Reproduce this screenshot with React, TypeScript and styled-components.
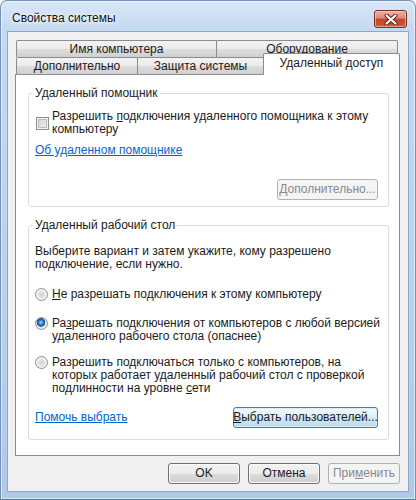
import React from "react";
import styled, { createGlobalStyle } from "styled-components";

const GlobalStyle = createGlobalStyle`
  html, body {
    margin: 0;
    padding: 0;
    background: #ffffff;
  }
  body {
    font-family: "Liberation Sans", Arial, sans-serif;
    font-size: 12px;
    line-height: 13px;
    color: #1b1b1b;
  }
`;

const Window = styled.div`
  box-sizing: border-box;
  width: 416px;
  height: 500px;
  display: flex;
  flex-direction: column;
  padding: 0 6px 7px;
  border: 1px solid #7391b6;
  border-bottom-color: #4a77a5;
  border-radius: 7px 7px 0 0;
  background: linear-gradient(
    180deg,
    #d9e7f7 0%,
    #c4d9f0 30px,
    #b9d1ec 60%,
    #aec9e8 100%
  );
  box-shadow: inset 0 0 0 1px rgba(255, 255, 255, 0.55);
`;

const TitleBar = styled.div`
  flex: none;
  height: 30px;
  display: flex;
  align-items: flex-start;
  justify-content: space-between;
  padding: 0 2px 0 5px;
`;

const Title = styled.div`
  margin-top: 10px;
  line-height: 15px;
  color: #111;
  text-shadow: 0 0 6px #fff, 0 0 3px #fff;
`;

const CloseButton = styled.div`
  box-sizing: border-box;
  margin-top: 9px;
  width: 33px;
  height: 18px;
  display: flex;
  align-items: center;
  justify-content: center;
  border: 1px solid #7a2c1e;
  border-radius: 3px;
  background: linear-gradient(
    180deg,
    #eab0a3 0%,
    #d98a77 45%,
    #c4452c 50%,
    #d0593c 100%
  );
  box-shadow: inset 0 0 0 1px rgba(255, 220, 210, 0.55);
`;

const Client = styled.div`
  flex: 1;
  min-height: 0;
  display: flex;
  flex-direction: column;
  padding: 8px 8px 7px 7px;
  background: #f0f0f0;
  border: 1px solid #8fa8c8;
`;

const TabRow = styled.div`
  flex: none;
  display: flex;
  padding-left: 1px;
`;

const Tab = styled.div<{ $w: number }>`
  box-sizing: border-box;
  width: ${(p) => p.$w}px;
  height: 17px;
  display: flex;
  align-items: center;
  justify-content: center;
  border: 1px solid #898c95;
  border-bottom: none;
  border-radius: 2px 2px 0 0;
  background: linear-gradient(
    180deg,
    #f3f3f3 0%,
    #ebebeb 50%,
    #dedede 50%,
    #d0d0d0 100%
  );
  white-space: nowrap;

  & + & {
    margin-left: -1px;
  }
`;

const ActiveTab = styled(Tab)`
  &&& {
    position: relative;
    z-index: 1;
    height: 22px;
    margin: -4px 0 -1px -1px;
    padding-bottom: 2px;
    background: #ffffff;
  }
`;

const Panel = styled.div`
  flex: 1;
  min-height: 0;
  display: flex;
  flex-direction: column;
  background: #ffffff;
  border: 1px solid #898c95;
  padding: 12px 10px 0 12px;
`;

const Group = styled.fieldset<{ $pb: number }>`
  margin: 0;
  min-width: 0;
  padding: 0 10px ${(p) => p.$pb}px 6px;
  border: 1px solid #d5dfe5;
  border-radius: 3px;

  & + & {
    margin-top: 12px;
  }
`;

const Legend = styled.legend`
  padding: 0 2px;
  margin-left: -2px;
  line-height: 13px;
`;

const CheckRow = styled.label`
  display: flex;
  align-items: center;
  gap: 3px;
  margin-top: 10px;
  padding-left: 1px;
  white-space: nowrap;
`;

const CheckBox = styled.span`
  box-sizing: border-box;
  flex: none;
  width: 13px;
  height: 13px;
  border: 1px solid #8e8f8f;
  box-shadow: inset 0 0 0 1px #f4f4f4, inset 0 0 0 2px #b9bcc1;
  background-image: linear-gradient(135deg, #cbcfd5 0%, #f6f6f6 100%);
`;

const RadioRow = styled.label<{ $mt: number }>`
  display: flex;
  align-items: flex-start;
  gap: 4px;
  margin-top: ${(p) => p.$mt}px;
  white-space: nowrap;
`;

const Radio = styled.span<{ $on?: boolean }>`
  box-sizing: border-box;
  flex: none;
  width: 13px;
  height: 13px;
  border-radius: 50%;
  border: 1px solid #8e8f8f;
  background: ${(p) =>
    p.$on
      ? "radial-gradient(circle at 45% 40%, #b6dcfa 0, #3d86cf 2px, #1b4f94 4px, #e9e9e9 4.6px, #f5f5f5 100%)"
      : "radial-gradient(circle at 50% 50%, #cfd1d4 0, #e2e3e4 3px, #f3f3f3 5px, #fafafa 100%)"};
`;

const Text = styled.div<{ $mt?: number }>`
  margin-top: ${(p) => p.$mt ?? 0}px;
  white-space: nowrap;
`;

const Key = styled.span`
  text-decoration: underline;
  text-underline-offset: 1px;
`;

const Link = styled.a<{ $mt?: number }>`
  display: block;
  width: fit-content;
  margin-top: ${(p) => p.$mt ?? 0}px;
  color: #0066cc;
  text-decoration: underline;
  text-underline-offset: 1px;
  cursor: pointer;
`;

const GroupBody = styled.div`
  display: flex;
  flex-direction: column;
`;

const ButtonRow = styled.div<{ $mt: number; $split?: boolean }>`
  display: flex;
  align-items: center;
  justify-content: ${(p) => (p.$split ? "space-between" : "flex-end")};
  margin-top: ${(p) => p.$mt}px;
`;

const Button = styled.div<{ $w: number; $disabled?: boolean; $focus?: boolean }>`
  box-sizing: border-box;
  width: ${(p) => p.$w}px;
  height: 21px;
  display: flex;
  align-items: center;
  justify-content: center;
  border-radius: 3px;
  white-space: nowrap;
  border: 1px solid
    ${(p) => (p.$disabled ? "#adb2b5" : p.$focus ? "#3c7fb1" : "#707070")};
  color: ${(p) => (p.$disabled ? "#8a8a8a" : "#1b1b1b")};
  box-shadow: inset 0 0 0 1px
    ${(p) => (p.$disabled ? "#f4f4f4" : p.$focus ? "#d8eefb" : "#fbfbfb")};
  background: ${(p) =>
    p.$disabled
      ? "#f4f4f4"
      : p.$focus
      ? "linear-gradient(180deg, #eef7fc 0%, #e1f0f9 50%, #cfe7f5 50%, #bcdcef 100%)"
      : "linear-gradient(180deg, #f2f2f2 0%, #ebebeb 50%, #dddddd 50%, #cfcfcf 100%)"};
`;

const Footer = styled.div`
  flex: none;
  display: flex;
  justify-content: flex-end;
  gap: 8px;
  margin-top: 7px;
`;

const CloseGlyph = () => (
  <svg width="14" height="11" viewBox="0 0 14 11">
    <path
      d="M2.5 1.5 L11.5 9.5 M11.5 1.5 L2.5 9.5"
      stroke="#5a1a10"
      strokeWidth="4"
      strokeLinecap="round"
    />
    <path
      d="M2.5 1.5 L11.5 9.5 M11.5 1.5 L2.5 9.5"
      stroke="#ffffff"
      strokeWidth="2.2"
      strokeLinecap="round"
    />
  </svg>
);

export default function App() {
  return (
    <>
      <GlobalStyle />
      <Window>
        <TitleBar>
          <Title>Свойства системы</Title>
          <CloseButton>
            <CloseGlyph />
          </CloseButton>
        </TitleBar>

        <Client>
          <TabRow>
            <Tab $w={201}>Имя компьютера</Tab>
            <Tab $w={182}>Оборудование</Tab>
          </TabRow>
          <TabRow>
            <Tab $w={122}>Дополнительно</Tab>
            <Tab $w={127}>Защита системы</Tab>
            <ActiveTab $w={137}>Удаленный доступ</ActiveTab>
          </TabRow>

          <Panel>
            <Group $pb={6}>
              <Legend>Удаленный помощник</Legend>
              <GroupBody>
                <CheckRow>
                  <CheckBox />
                  <span>
                    Разрешить <Key>п</Key>одключения удаленного помощника к этому
                    <br />
                    компьютеру
                  </span>
                </CheckRow>
                <Link $mt={8}>Об удаленном помощнике</Link>
                <ButtonRow $mt={22}>
                  <Button $w={101} $disabled>
                    <span>
                      <Key>Д</Key>ополнительно...
                    </span>
                  </Button>
                </ButtonRow>
              </GroupBody>
            </Group>

            <Group $pb={11}>
              <Legend>Удаленный рабочий стол</Legend>
              <GroupBody>
                <Text $mt={13}>
                  Выберите вариант и затем укажите, кому разрешено
                  <br />
                  подключение, если нужно.
                </Text>
                <RadioRow $mt={17}>
                  <Radio />
                  <span>
                    <Key>Н</Key>е разрешать подключения к этому компьютеру
                  </span>
                </RadioRow>
                <RadioRow $mt={16}>
                  <Radio $on />
                  <span>
                    Ра<Key>з</Key>решать подключения от компьютеров с любой версией
                    <br />
                    удаленного рабочего стола (опаснее)
                  </span>
                </RadioRow>
                <RadioRow $mt={13}>
                  <Radio />
                  <span>
                    Разрешить подключаться только с компьютеров, на
                    <br />
                    которых работает удаленный рабочий стол с проверкой
                    <br />
                    подлинности на уровне <Key>с</Key>ети
                  </span>
                </RadioRow>
                <ButtonRow $mt={12} $split>
                  <Link>Помочь выбрать</Link>
                  <Button $w={145} $focus>
                    <span>
                      <Key>В</Key>ыбрать пользователей...
                    </span>
                  </Button>
                </ButtonRow>
              </GroupBody>
            </Group>
          </Panel>

          <Footer>
            <Button $w={72}>OK</Button>
            <Button $w={72}>Отмена</Button>
            <Button $w={72} $disabled>
              <span>
                При<Key>м</Key>енить
              </span>
            </Button>
          </Footer>
        </Client>
      </Window>
    </>
  );
}
